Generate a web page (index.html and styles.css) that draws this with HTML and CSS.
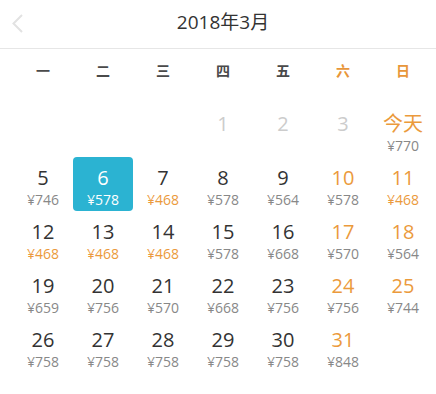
FILE: index.html
```html
<!DOCTYPE html>
<html lang="zh-CN">
<head>
<meta charset="utf-8">
<title>2018年3月</title>
<link rel="stylesheet" href="styles.css">
</head>
<body>
<div class="calendar">
  <div class="header">
    <div class="prev">
      <svg width="16" height="24" viewBox="0 0 16 24"><path d="M11 3 L2.5 11.5 L11 20" fill="none" stroke="#e2e2e2" stroke-width="2"/></svg>
    </div>
    <div class="title">2018年3月</div>
    <div></div>
  </div>
  <div class="weekdays">
    <span>一</span><span>二</span><span>三</span><span>四</span><span>五</span><span class="we">六</span><span class="we">日</span>
  </div>
  <div class="grid">
    <div class="cell"></div>
    <div class="cell"></div>
    <div class="cell"></div>
    <div class="cell off"><span class="num">1</span></div>
    <div class="cell off"><span class="num">2</span></div>
    <div class="cell off"><span class="num">3</span></div>
    <div class="cell we"><span class="num">今天</span><span class="price">¥770</span></div>

    <div class="cell"><span class="num">5</span><span class="price">¥746</span></div>
    <div class="cell sel"><span class="num">6</span><span class="price">¥578</span></div>
    <div class="cell"><span class="num">7</span><span class="price low">¥468</span></div>
    <div class="cell"><span class="num">8</span><span class="price">¥578</span></div>
    <div class="cell"><span class="num">9</span><span class="price">¥564</span></div>
    <div class="cell we"><span class="num">10</span><span class="price">¥578</span></div>
    <div class="cell we"><span class="num">11</span><span class="price low">¥468</span></div>

    <div class="cell"><span class="num">12</span><span class="price low">¥468</span></div>
    <div class="cell"><span class="num">13</span><span class="price low">¥468</span></div>
    <div class="cell"><span class="num">14</span><span class="price low">¥468</span></div>
    <div class="cell"><span class="num">15</span><span class="price">¥578</span></div>
    <div class="cell"><span class="num">16</span><span class="price">¥668</span></div>
    <div class="cell we"><span class="num">17</span><span class="price">¥570</span></div>
    <div class="cell we"><span class="num">18</span><span class="price">¥564</span></div>

    <div class="cell"><span class="num">19</span><span class="price">¥659</span></div>
    <div class="cell"><span class="num">20</span><span class="price">¥756</span></div>
    <div class="cell"><span class="num">21</span><span class="price">¥570</span></div>
    <div class="cell"><span class="num">22</span><span class="price">¥668</span></div>
    <div class="cell"><span class="num">23</span><span class="price">¥756</span></div>
    <div class="cell we"><span class="num">24</span><span class="price">¥756</span></div>
    <div class="cell we"><span class="num">25</span><span class="price">¥744</span></div>

    <div class="cell"><span class="num">26</span><span class="price">¥758</span></div>
    <div class="cell"><span class="num">27</span><span class="price">¥758</span></div>
    <div class="cell"><span class="num">28</span><span class="price">¥758</span></div>
    <div class="cell"><span class="num">29</span><span class="price">¥758</span></div>
    <div class="cell"><span class="num">30</span><span class="price">¥758</span></div>
    <div class="cell we"><span class="num">31</span><span class="price">¥848</span></div>
    <div class="cell"></div>
  </div>
</div>
</body>
</html>
```

FILE: styles.css
```css
html, body {
  margin: 0;
  padding: 0;
  background: #ffffff;
}
body {
  font-family: "Open Sans", "Noto Sans CJK SC", sans-serif;
  color: #333333;
  width: 436px;
  height: 394px;
  overflow: hidden;
}
.header {
  height: 48px;
  border-bottom: 1px solid #e6e6e6;
  display: grid;
  grid-template-columns: 60px 1fr 60px;
  padding: 0 3px 0 13px;
  align-items: start;
}
.prev {
  height: 48px;
  display: flex;
  align-items: center;
  margin-left: -2px;
}
.prev svg {
  display: block;
}
.title {
  text-align: center;
  font-size: 19px;
  line-height: 44px;
  color: #333333;
}
.weekdays {
  display: grid;
  grid-template-columns: repeat(7, 60px);
  padding: 0 0 12px 13px;
  height: 42px;
  align-items: center;
}
.weekdays span {
  text-align: center;
  font-family: "Noto Sans CJK SC", sans-serif;
  font-size: 14px;
  font-weight: bold;
  color: #4a4a4a;
  line-height: 42px;
}
.weekdays span.we {
  color: #e8963a;
}
.grid {
  display: grid;
  grid-template-columns: repeat(7, 60px);
  grid-auto-rows: 54px;
  padding-left: 13px;
}
.cell {
  display: flex;
  flex-direction: column;
  align-items: center;
  padding-top: 9px;
  box-sizing: border-box;
}
.num {
  font-size: 20px;
  line-height: 24px;
  color: #333333;
}
.price {
  font-size: 14px;
  line-height: 20px;
  color: #888888;
}
.price.low {
  color: #eb9a3c;
}
.cell.we .num {
  color: #eb9a3c;
}
.cell.off .num {
  color: #cccccc;
}
.cell.sel {
  background: #2bb3d2;
  border-radius: 4px;
}
.cell.sel .num,
.cell.sel .price {
  color: #ffffff;
}
```
